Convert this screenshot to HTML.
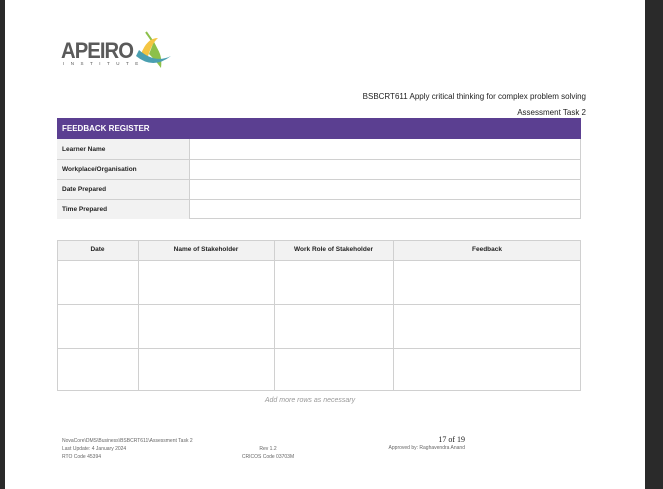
<!DOCTYPE html><html><head><style>
body{margin:0;width:663px;height:489px;background:#2a2a2a;position:relative;overflow:hidden;font-family:"Liberation Sans",sans-serif}
.pg{position:absolute;left:5px;top:0;width:640px;height:489px;background:#fff}
.a{position:absolute}
.t{position:absolute;font-size:7px;color:#222;font-family:"Liberation Sans",sans-serif}
</style></head><body>
<div class="pg"></div>
<div class="t" style="left:61px;top:38px;font-size:22px;font-weight:bold;color:#5a5a5a;letter-spacing:-1px;transform:scaleX(.92);transform-origin:left">APEIRO</div>
<div class="t" style="left:63px;top:61px;font-size:4.5px;letter-spacing:6.5px;color:#555">INSTITUTE</div>
<svg class="a" style="left:133px;top:30px" width="40" height="42"><path d="M13 2 L20 12 L24 20" stroke="#8cc04a" stroke-width="2" fill="none"/><path d="M8 24 Q14 8 25 8 Q18 14 14 30Z" fill="#f4c542"/><path d="M20 14 Q30 22 28 38 Q22 30 16 24Z" fill="#8cc04a"/><path d="M3 26 Q20 40 38 26 Q22 34 6 20Z" fill="#4a9fb0"/></svg>
<div class="t" style="left:350px;top:92px;width:236px;text-align:right;font-size:8px">BSBCRT611 Apply critical thinking for complex problem solving</div>
<div class="t" style="left:450px;top:108px;width:136px;text-align:right;font-size:8px">Assessment Task 2</div>
<div class="a" style="left:57px;top:118px;width:524px;height:21px;background:#5b3f91;color:#fff;font-size:8px;font-weight:bold;line-height:21px;padding-left:5px;box-sizing:border-box">FEEDBACK REGISTER</div>
<div class="a" style="left:57px;top:139px;width:524px;height:80px;border:1px solid #d0d0d0;border-top:0;box-sizing:border-box"></div>
<div class="a" style="left:57px;top:139px;width:132px;height:80px;background:#f2f2f2;border-right:1px solid #d0d0d0"></div>
<div class="a" style="left:57px;top:159px;width:524px;border-top:1px solid #d0d0d0"></div>
<div class="a" style="left:57px;top:179px;width:524px;border-top:1px solid #d0d0d0"></div>
<div class="a" style="left:57px;top:199px;width:524px;border-top:1px solid #d0d0d0"></div>
<div class="t" style="left:62px;top:146px;font-weight:bold;font-size:6.5px">Learner Name</div>
<div class="t" style="left:62px;top:166px;font-weight:bold;font-size:6.5px">Workplace/Organisation</div>
<div class="t" style="left:62px;top:186px;font-weight:bold;font-size:6.5px">Date Prepared</div>
<div class="t" style="left:62px;top:206px;font-weight:bold;font-size:6.5px">Time Prepared</div>
<div class="a" style="left:57px;top:240px;width:524px;height:151px;border:1px solid #d0d0d0;box-sizing:border-box"></div>
<div class="a" style="left:58px;top:241px;width:522px;height:19px;background:#f2f2f2;border-bottom:1px solid #d0d0d0"></div>
<div class="a" style="left:57px;top:304px;width:524px;border-top:1px solid #d0d0d0"></div>
<div class="a" style="left:57px;top:348px;width:524px;border-top:1px solid #d0d0d0"></div>
<div class="a" style="left:138px;top:240px;height:151px;border-left:1px solid #d0d0d0"></div>
<div class="a" style="left:274px;top:240px;height:151px;border-left:1px solid #d0d0d0"></div>
<div class="a" style="left:393px;top:240px;height:151px;border-left:1px solid #d0d0d0"></div>
<div class="t" style="left:57px;top:246px;width:81px;text-align:center;font-weight:bold;font-size:6.5px">Date</div>
<div class="t" style="left:138px;top:246px;width:136px;text-align:center;font-weight:bold;font-size:6.5px">Name of Stakeholder</div>
<div class="t" style="left:274px;top:246px;width:119px;text-align:center;font-weight:bold;font-size:6.5px">Work Role of Stakeholder</div>
<div class="t" style="left:393px;top:246px;width:188px;text-align:center;font-weight:bold;font-size:6.5px">Feedback</div>
<div class="t" style="left:200px;top:397px;width:220px;text-align:center;font-style:italic;color:#999;font-size:7px">Add more rows as necessary</div>
<div class="t" style="left:62px;top:437px;font-size:5px;color:#666;line-height:8px">NovaCore\DMS\Business\BSBCRT611\Assessment Task 2<br>Last Update: 4 January 2024<br>RTO Code 45394</div>
<div class="t" style="left:230px;top:445px;width:76px;text-align:center;font-size:5px;color:#666;line-height:8px">Rev 1.2<br>CRICOS Code 03703M</div>
<div class="t" style="left:390px;top:435px;width:75px;text-align:right;font-size:8px;font-family:'Liberation Serif',serif">17 of 19</div>
<div class="t" style="left:340px;top:445px;width:125px;text-align:right;font-size:5px;color:#666">Approved by: Raghavendra Anand</div>
</body></html>
